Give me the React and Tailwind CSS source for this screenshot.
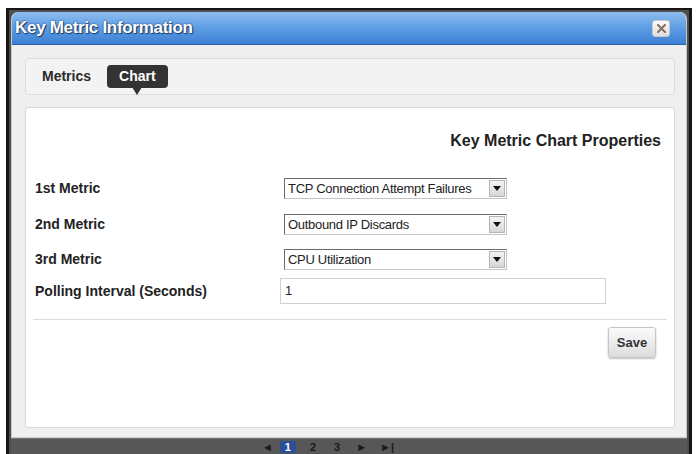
import React from 'react';

const metrics = [
    { label: '1st Metric', value: 'TCP Connection Attempt Failures', gap: 'mt-0' },
    { label: '2nd Metric', value: 'Outbound IP Discards', gap: 'mt-[15px]' },
    { label: '3rd Metric', value: 'CPU Utilization', gap: 'mt-[14px]' },
];

function SelectBox({ value }) {
    return (
        <div className="ml-[4px] w-[223px] h-[21px] flex items-center border border-t-[#6b6b6b] border-l-[#6b6b6b] border-r-[#c4c4c4] border-b-[#c4c4c4] bg-white">
            <span className="flex-1 pl-[3px] text-[13px] tracking-[-0.3px] text-[#222] whitespace-nowrap overflow-hidden">{value}</span>
            <span className="w-[16px] h-[17px] mr-[1px] flex items-center justify-center border border-[#b5b5b5] bg-gradient-to-b from-[#f4f4f4] to-[#d6d6d6]">
                <svg width="8" height="5" viewBox="0 0 8 5">
                    <path d="M0 0 L8 0 L4 5 Z" fill="#111" />
                </svg>
            </span>
        </div>
    );
}

function App() {
    return (
        <div className="w-[698px] h-[454px] overflow-hidden bg-white pt-[8px] px-[6px] font-['Liberation_Sans',Arial,sans-serif]">
            <div className="h-[446px] flex flex-col bg-[#4f4f4f] border-t-[2px] border-x-[3px] border-[#161616] px-[2px] pt-[2px]">
                {/* dialog */}
                <div className="h-[426px] shrink-0 flex flex-col rounded-t-[7px] bg-[#efefef] border-x border-b border-[#c9c9c9]">
                    <div className="h-[33px] shrink-0 flex items-center justify-between pl-[3px] pr-[16px] rounded-t-[7px] bg-gradient-to-b from-[#8dbcee] via-[#5d9de4] to-[#3c7fd3] border-b border-[#2b62aa]">
                        <span className="text-[17px] font-bold text-white tracking-[-0.3px] [text-shadow:0_0_2px_#1b3a66,1px_1px_1px_#1b3a66]">
                            Key Metric Information
                        </span>
                        <span className="w-[18px] h-[17px] flex items-center justify-center rounded-[3px] border border-[#c8c8c8] bg-gradient-to-b from-[#fafafa] to-[#dedede]">
                            <svg width="9" height="9" viewBox="0 0 9 9">
                                <path d="M1 1 L8 8 M8 1 L1 8" stroke="#8a6b5c" strokeWidth="2" strokeLinecap="round" />
                            </svg>
                        </span>
                    </div>

                    <div className="flex-1 flex flex-col pl-[13px] pr-[11px] pt-[13px] pb-[9px]">
                        {/* tabs */}
                        <div className="h-[37px] shrink-0 flex items-center pl-[16px] gap-[16px] rounded-[4px] border border-[#dcdcdc] bg-[#f3f3f3]">
                            <span className="text-[14px] font-bold text-[#2a2a2a]">Metrics</span>
                            <span className="relative h-[23px] px-[12px] flex items-center rounded-[4px] bg-[#333] text-[14px] font-bold text-white">
                                Chart
                                <span className="absolute left-1/2 -translate-x-1/2 top-[22px] w-0 h-0 border-x-[5px] border-x-transparent border-t-[8px] border-t-[#333]" />
                            </span>
                        </div>

                        {/* chart properties */}
                        <div className="flex-1 mt-[12px] flex flex-col rounded-[3px] border border-[#d8d8d8] bg-white pt-[23px]">
                            <h2 className="text-right pr-[13px] text-[16px] leading-[20px] font-bold text-[#222]">
                                Key Metric Chart Properties
                            </h2>

                            <div className="mt-[27px] pl-[9px]">
                                {metrics.map((m) => (
                                    <div key={m.label} className={`${m.gap} grid grid-cols-[245px_1fr] items-center`}>
                                        <span className="text-[14px] font-bold text-[#222]">{m.label}</span>
                                        <SelectBox value={m.value} />
                                    </div>
                                ))}
                                <div className="mt-[8px] grid grid-cols-[245px_1fr] items-center">
                                    <span className="text-[14px] font-bold text-[#222]">Polling Interval (Seconds)</span>
                                    <div className="w-[326px] h-[26px] flex items-center pl-[4px] border border-[#d2d2d2] text-[13px] text-[#222]">
                                        1
                                    </div>
                                </div>
                            </div>

                            <div className="mt-[15px] mx-[7px] h-px bg-[#dcdcdc]" />

                            <div className="flex justify-end pr-[18px] mt-[7px]">
                                <button className="w-[48px] h-[31px] rounded-[3px] border border-[#c6c6c6] bg-gradient-to-b from-[#fbfbfb] to-[#dcdcdc] shadow-[0_1px_2px_rgba(0,0,0,0.25)] text-[13px] font-bold text-[#333]">
                                    Save
                                </button>
                            </div>
                        </div>
                    </div>
                </div>

                {/* pager behind the dialog */}
                <div className="flex-1 flex items-start pl-[251px] pt-[2px] border-t border-[#777] bg-[#575757] text-[11px] leading-[12px] font-bold text-[#1a1a1a]">
                    <span>◄</span>
                    <span className="ml-[7px] w-[16px] h-[12px] bg-[#2d4f9a] text-white text-center">1</span>
                    <span className="ml-[14px]">2</span>
                    <span className="ml-[18px]">3</span>
                    <span className="ml-[16px]">►</span>
                    <span className="ml-[13px]">►|</span>
                </div>
            </div>
        </div>
    );
}

export default App;
